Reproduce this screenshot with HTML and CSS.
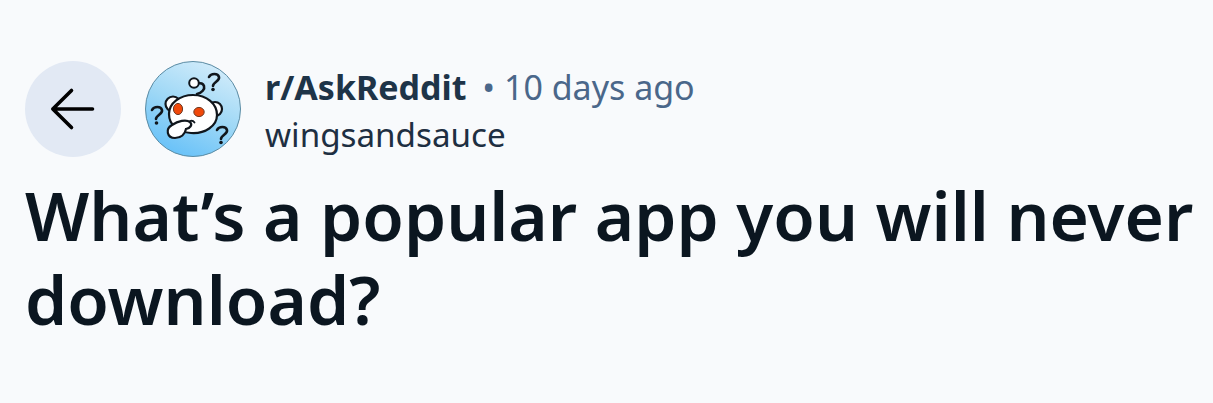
FILE: index.html
```
<!DOCTYPE html>
<html lang="en">
<head>
<meta charset="utf-8">
<title>What’s a popular app you will never download?</title>
<link rel="stylesheet" href="styles.css">
</head>
<body>
<main class="post">
  <header class="meta">
    <button class="back" aria-label="Back">
      <svg width="48" height="48" viewBox="0 0 48 48" fill="none" stroke="#000" stroke-width="3.600" stroke-linecap="round" stroke-linejoin="round"><path d="M43.500 24H3.800M22.500 5.500 3.800 24l18.700 18.500"/></svg>
    </button>
    <svg class="avatar" viewBox="0 0 96 96" role="img" aria-label="r/AskReddit icon">
      <defs>
        <linearGradient id="sky" x1=".8" y1=".1" x2=".4" y2=".98">
          <stop offset="0" stop-color="#cdeafa"/>
          <stop offset=".5" stop-color="#9fd8f6"/>
          <stop offset="1" stop-color="#6cc3f8"/>
        </linearGradient>
      </defs>
      <circle cx="48" cy="48" r="47.500" fill="url(#sky)" stroke="#5b8ba3"/>
      <g fill="none" stroke="#10161c" stroke-width="2.600" stroke-linecap="round">
        <path d="M52 33c5-1 8-5 7-8-1-3-3-3-6-3"/>
        <path d="M64 16c2-4 9-4 10 0 1 4-6 5-6 9"/>
        <path d="M7 49c2-4 9-4 10 0 1 4-6 5-6 9"/>
        <path d="M72 69c2-4 9-4 10 0 1 4-6 5-6 9"/>
      </g>
      <g fill="#10161c">
        <circle cx="68" cy="28.500" r="1.800"/>
        <circle cx="11.500" cy="62" r="1.800"/>
        <circle cx="76" cy="81.500" r="1.800"/>
      </g>
      <circle cx="49" cy="22" r="4.800" fill="#fff" stroke="#10161c" stroke-width="2"/>
      <g fill="#fff" stroke="#10161c" stroke-width="2.200">
        <circle cx="28" cy="43" r="7.500"/>
        <circle cx="70" cy="48" r="7"/>
        <path d="M24 53c0-11 11-19 24-19 14 0 24 9 24 20 0 11-12 19-26 18-13-1-22-8-22-19z"/>
        <path d="M30 77c-8 0-10-9-3-13 6-4 14-6 18-3 3 3 0 6-4 7-1 5-5 9-11 9z"/>
      </g>
      <ellipse cx="33" cy="48" rx="4.600" ry="5.600" fill="#f0480a" stroke="#6e3a24" stroke-width="1"/>
      <ellipse cx="54" cy="51" rx="5.200" ry="4.600" fill="#f0480a" stroke="#6e3a24" stroke-width="1"/>
      <path d="M45 60c2-.6 3.500 0 4.500 1.500" fill="none" stroke="#10161c" stroke-width="1.800" stroke-linecap="round"/>
    </svg>
    <div class="byline">
      <p class="source"><strong class="sub">r/AskReddit</strong><span class="time"> • 10 days ago</span></p>
      <p class="author">wingsandsauce</p>
    </div>
  </header>
  <h1 class="title">What’s a popular app you will never download?</h1>
</main>
</body>
</html>
```
FILE: styles.css
```
* { box-sizing: border-box; }
html, body { margin: 0; height: 100%; }
body {
  background: #f8fafc;
  font-family: "Noto Sans", "Open Sans", sans-serif;
}
.post { padding: 61px 0 0 25px; }
.meta { display: flex; align-items: flex-start; gap: 24px; }
.back {
  width: 96px; height: 96px; padding: 0; border: 0; border-radius: 50%;
  background: #e2e9f4;
  display: flex; align-items: center; justify-content: center;
}
.avatar { width: 96px; height: 96px; display: block; }
.byline { display: flex; flex-direction: column; padding-top: 2px; }
.source, .author { margin: 0; line-height: 48px; white-space: nowrap; }
.source { font-size: 34px; }
.author { font-size: 33.200px; color: #1e2f42; }
.sub { color: #1e3448; font-weight: 700; }
.time { color: #4a678a; margin-left: 7px; }
.title {
  margin: 14px 0 0; font-size: 67.500px; line-height: 84px; font-weight: 600;
  color: #0b1620; max-width: 1185px;
}
```
